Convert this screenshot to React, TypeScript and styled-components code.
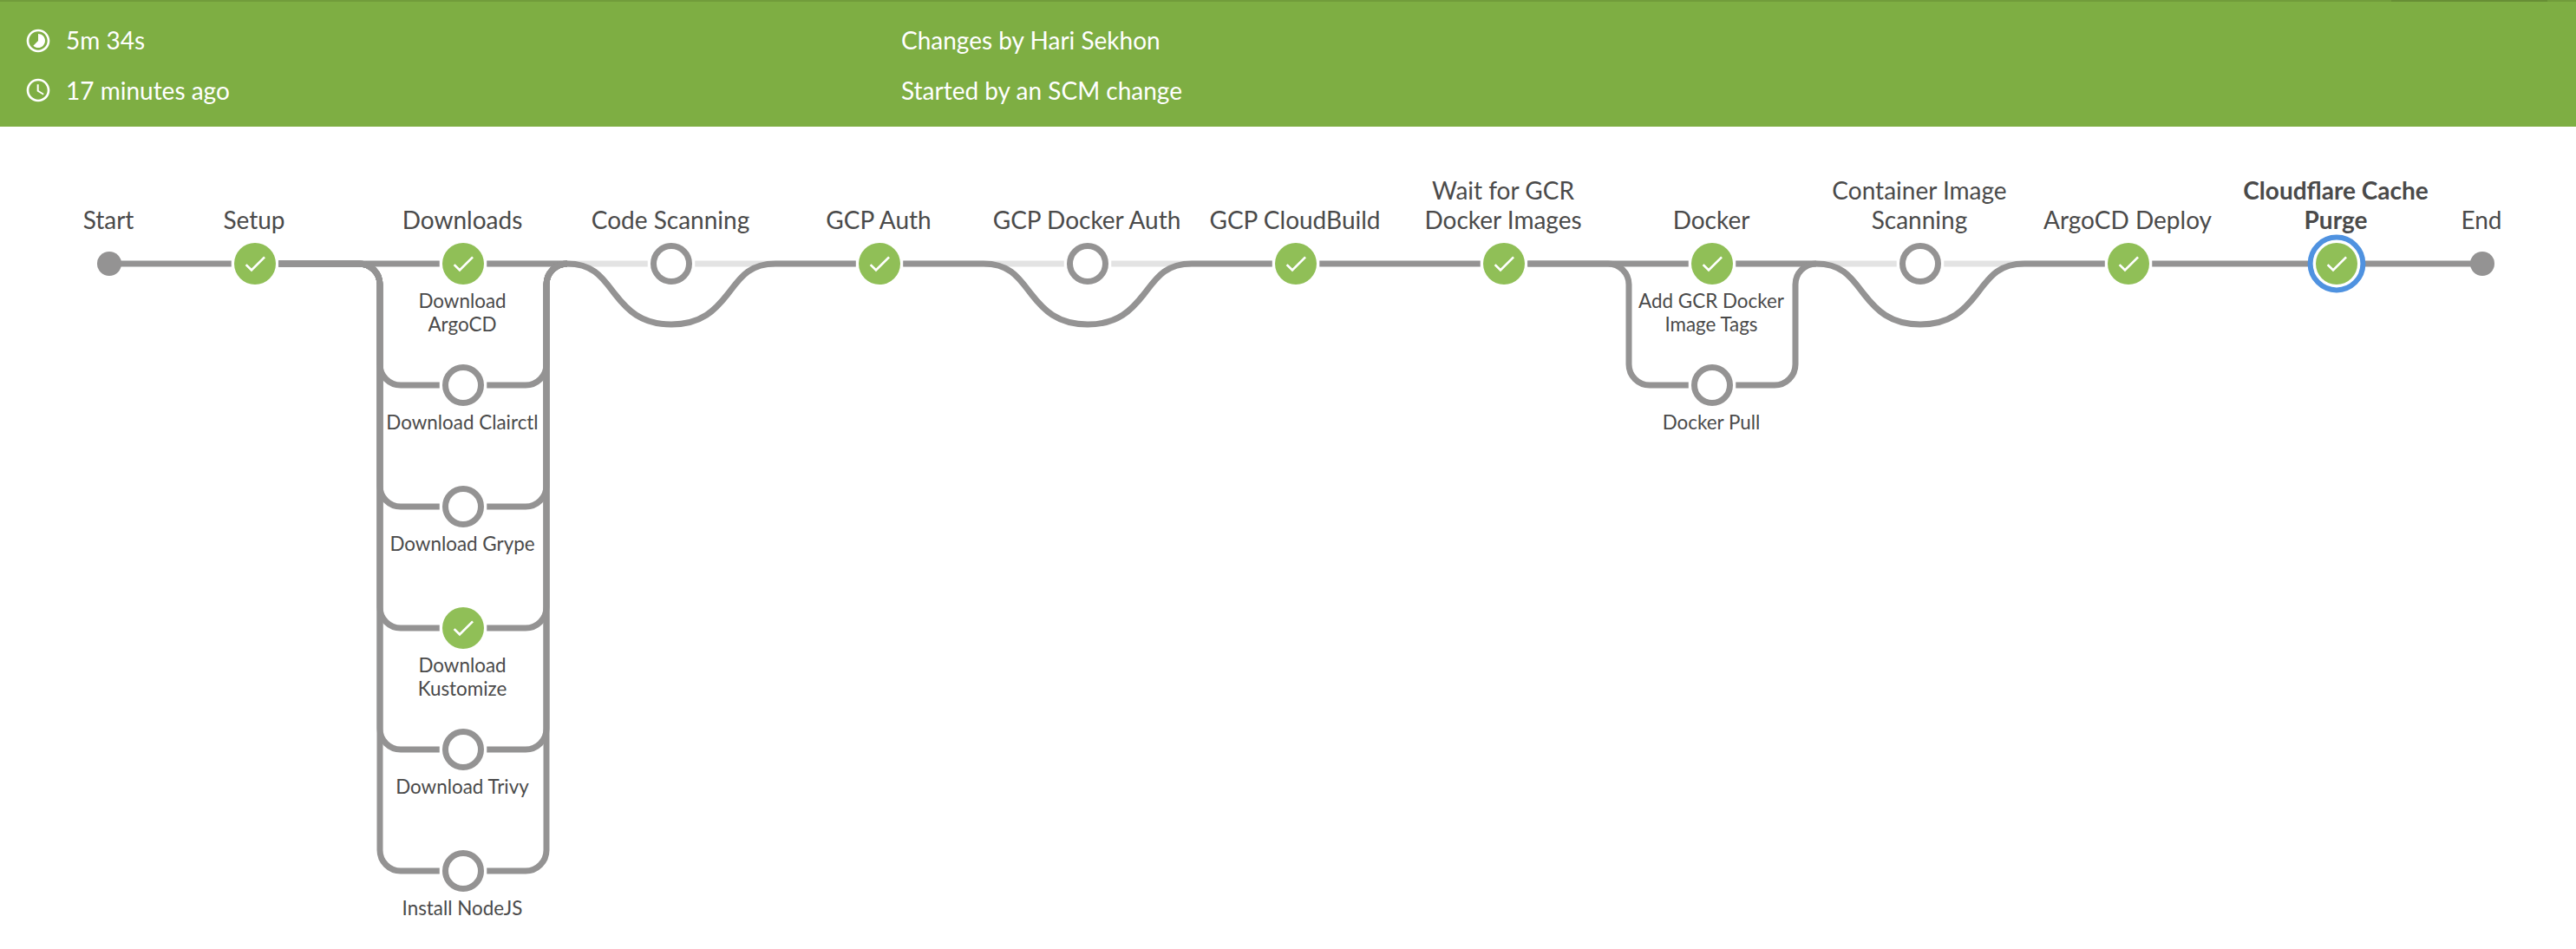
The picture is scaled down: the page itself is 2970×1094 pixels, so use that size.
import React from "react";
import styled, { createGlobalStyle } from "styled-components";

const GREY = "#949393";
const LIGHT = "#e3e3e3";
const GREEN = "#90bf57";
const BLUE = "#4f92e0";

const SPACING = 240;
const ROW = 140;
const BASE = 158;
const NODE_R = 24;
const GAP = 27.25;
const CURVE = 24;
const SIDE = 96;

const GlobalStyle = createGlobalStyle`
  *, *::before, *::after { box-sizing: border-box; }
  body {
    margin: 0;
    background: #ffffff;
    color: #4a4a4a;
    font-family: Lato, "Open Sans", sans-serif;
    font-size: 28px;
  }
`;

const Page = styled.div`
  display: flex;
  flex-direction: column;
  height: 1094px;
  overflow: hidden;
`;

const TabLine = styled.div`
  display: flex;
  height: 2px;
  padding-left: 2757px;
  background: #719c3b;
`;

const ActiveTab = styled.div`
  width: 180px;
  background: #678e35;
`;

const Summary = styled.header`
  display: grid;
  grid-template-columns: 1011px 1fr;
  height: 144px;
  padding: 15px 28px 0;
  background: #7eae43;
  color: #ffffff;
`;

const Column = styled.div`
  display: flex;
  flex-direction: column;
`;

const Fact = styled.div`
  display: flex;
  align-items: center;
  gap: 16px;
  height: 58px;
  white-space: nowrap;
`;

const FactIcon = styled.svg<{ $drop?: number }>`
  width: 32px;
  height: 32px;
  margin-top: ${(p) => (p.$drop ?? 0) * 2}px;
  fill: currentColor;
`;

const Graph = styled.main`
  position: relative;
  flex: 1;
`;

const Lines = styled.svg`
  display: block;
  width: 2970px;
  height: 948px;
  fill: none;
`;

const StageLabel = styled.div<{ $x: number; $bold?: boolean }>`
  position: absolute;
  left: ${(p) => p.$x - 120}px;
  bottom: ${948 - BASE + 34}px;
  width: 238px;
  line-height: 34px;
  text-align: center;
  white-space: pre;
  font-weight: ${(p) => (p.$bold ? 700 : 400)};
`;

const StepLabel = styled.div<{ $x: number; $y: number }>`
  position: absolute;
  left: ${(p) => p.$x - 120}px;
  top: ${(p) => p.$y + 29}px;
  width: 238px;
  font-size: 22.4px;
  line-height: 27px;
  text-align: center;
  white-space: pre;
`;

type Status = "success" | "skipped" | "terminal";
type Step = { name: string; status: Status };
type Stage = {
  name: string;
  x: number;
  status: Status;
  steps?: Step[];
  selected?: boolean;
};

const column = (i: number) => 294 + i * SPACING;

const stages: Stage[] = [
  { name: "Start", x: 126, status: "terminal" },
  { name: "Setup", x: column(0), status: "success" },
  {
    name: "Downloads",
    x: column(1),
    status: "success",
    steps: [
      { name: "Download\nArgoCD", status: "success" },
      { name: "Download Clairctl", status: "skipped" },
      { name: "Download Grype", status: "skipped" },
      { name: "Download\nKustomize", status: "success" },
      { name: "Download Trivy", status: "skipped" },
      { name: "Install NodeJS", status: "skipped" },
    ],
  },
  { name: "Code Scanning", x: column(2), status: "skipped" },
  { name: "GCP Auth", x: column(3), status: "success" },
  { name: "GCP Docker Auth", x: column(4), status: "skipped" },
  { name: "GCP CloudBuild", x: column(5), status: "success" },
  { name: "Wait for GCR\nDocker Images", x: column(6), status: "success" },
  {
    name: "Docker",
    x: column(7),
    status: "success",
    steps: [
      { name: "Add GCR Docker\nImage Tags", status: "success" },
      { name: "Docker Pull", status: "skipped" },
    ],
  },
  { name: "Container Image\nScanning", x: column(8), status: "skipped" },
  { name: "ArgoCD Deploy", x: column(9), status: "success" },
  { name: "Cloudflare Cache\nPurge", x: column(10), status: "success", selected: true },
  { name: "End", x: 2862, status: "terminal" },
];

function Node({ x, y, status, selected }: { x: number; y: number; status: Status; selected?: boolean }) {
  if (status === "terminal") return <circle cx={x} cy={y} r={14} fill={GREY} />;
  return (
    <g transform={`translate(${x} ${y})`}>
      {selected && <circle r={30.4} fill="#fff" stroke={BLUE} strokeWidth={6} />}
      {status === "success" ? (
        <>
          <circle r={NODE_R} fill={GREEN} />
          <polygon
            transform="scale(2)"
            fill="#fff"
            points="-2,2.8 -4.71,0.09 -5.65,1.03 -2,4.68 6,-3.32 5.06,-4.26"
          />
        </>
      ) : (
        <circle r={20.5} fill="#fff" stroke={GREY} strokeWidth={7} />
      )}
    </g>
  );
}

/* Straight track on both sides of every node on the main row. */
function MainTrack() {
  return (
    <>
      {stages.slice(1).map((next, i) => {
        const prev = stages[i];
        const x1 = prev.x + (prev.status === "terminal" ? 0 : GAP);
        const x2 = next.x - (next.status === "terminal" ? 0 : GAP);
        const light = prev.status === "skipped" || next.status === "skipped";
        return <path key={next.name} d={`M${x1} ${BASE}H${x2}`} stroke={light ? LIGHT : GREY} />;
      })}
    </>
  );
}

/* Curve that dips below a stage that was not run. */
function Bypass({ index }: { index: number }) {
  const { x } = stages[index];
  const y = BASE;
  const h = ROW / 2;
  const l = x - SPACING / 2;
  const r = x + SPACING / 2;
  return (
    <path
      stroke={GREY}
      d={[
        `M${stages[index - 1].x + GAP} ${y}H${l}`,
        `C${l + 31} ${y} ${l + 41} ${y + h / 2 - 18} ${l + 55} ${y + h / 2}`,
        `S${x - 35} ${y + h} ${x} ${y + h}`,
        `S${r - 69} ${y + h / 2 + 18} ${r - 55} ${y + h / 2}`,
        `S${r - 31} ${y} ${r} ${y}`,
        `H${stages[index + 1].x - GAP}`,
      ].join("")}
    />
  );
}

/* Track that leaves the main row, runs through a parallel step and rejoins it. */
function Branch({ x, y }: { x: number; y: number }) {
  const c = CURVE;
  const l = x - SIDE;
  const r = x + SIDE;
  return (
    <path
      stroke={GREY}
      d={[
        `M${x - SPACING + GAP} ${BASE}H${l - c}`,
        `A${c} ${c} 0 0 1 ${l} ${BASE + c}V${y - c}A${c} ${c} 0 0 0 ${l + c} ${y}H${x - GAP}`,
        `M${x + GAP} ${y}H${r - c}A${c} ${c} 0 0 0 ${r} ${y - c}V${BASE + c}`,
        `A${c} ${c} 0 0 1 ${r + c} ${BASE}`,
      ].join("")}
    />
  );
}

export default function App() {
  return (
    <Page>
      <GlobalStyle />
      <TabLine>
        <ActiveTab />
      </TabLine>
      <Summary>
        <Column>
          <Fact>
            <FactIcon viewBox="0 0 24 24" $drop={1}>
              <path d="M16.24 7.76C15.07 6.59 13.54 6 12 6v6l-4.24 4.24c2.34 2.34 6.14 2.34 8.49 0 2.34-2.34 2.34-6.14-.01-8.48zM12 2C6.48 2 2 6.48 2 12s4.48 10 10 10 10-4.48 10-10S17.52 2 12 2zm0 18c-4.42 0-8-3.58-8-8s3.58-8 8-8 8 3.58 8 8-3.58 8-8 8z" />
            </FactIcon>
            <span>5m 34s</span>
          </Fact>
          <Fact>
            <FactIcon viewBox="0 0 24 24">
              <path d="M11.99 2C6.47 2 2 6.48 2 12s4.47 10 9.99 10C17.52 22 22 17.52 22 12S17.52 2 11.99 2zM12 20c-4.42 0-8-3.58-8-8s3.58-8 8-8 8 3.58 8 8-3.58 8-8 8z" />
              <path d="M12.5 7H11v6l5.25 3.15.75-1.23-4.5-2.67z" />
            </FactIcon>
            <span>17 minutes ago</span>
          </Fact>
        </Column>
        <Column>
          <Fact>Changes by Hari Sekhon</Fact>
          <Fact>Started by an SCM change</Fact>
        </Column>
      </Summary>
      <Graph>
        <Lines viewBox="0 0 2970 948" strokeWidth={7}>
          <MainTrack />
          {stages.map((s, i) => s.status === "skipped" && <Bypass key={s.name} index={i} />)}
          {stages.map((s) =>
            s.steps?.slice(1).map((step, i) => (
              <Branch key={step.name} x={s.x} y={BASE + ROW * (i + 1)} />
            ))
          )}
          <g strokeWidth={0}>
            {stages.map((s) => (
              <Node key={s.name} x={s.x} y={BASE} status={s.status} selected={s.selected} />
            ))}
            {stages.map((s) =>
              s.steps?.slice(1).map((step, i) => (
                <Node key={step.name} x={s.x} y={BASE + ROW * (i + 1)} status={step.status} />
              ))
            )}
          </g>
        </Lines>
        {stages.map((s) => (
          <StageLabel key={s.name} $x={s.x} $bold={s.selected}>
            {s.name}
          </StageLabel>
        ))}
        {stages.map((s) =>
          s.steps?.map((step, i) => (
            <StepLabel key={step.name} $x={s.x} $y={BASE + ROW * i}>
              {step.name}
            </StepLabel>
          ))
        )}
      </Graph>
    </Page>
  );
}
